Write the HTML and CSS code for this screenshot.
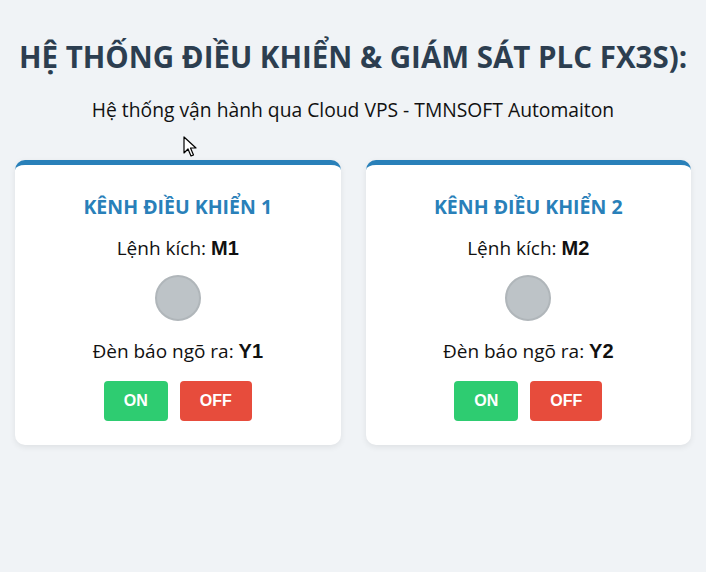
FILE: index.html
```html
<!DOCTYPE html>
<html lang="vi">
<head>
    <meta charset="UTF-8">
    <meta name="viewport" content="width=device-width, initial-scale=1.0">
    <title>PLC FX3S</title>
    <link rel="stylesheet" href="styles.css">
</head>
<body>
    <h1 class="title">HỆ THỐNG ĐIỀU KHIỂN &amp; GIÁM SÁT PLC FX3S):</h1>
    <p class="subtitle">Hệ thống vận hành qua Cloud VPS - TMNSOFT Automaiton</p>

    <div class="grid">
        <div class="card">
            <h3>KÊNH ĐIỀU KHIỂN 1</h3>
            <p class="line">Lệnh kích: <b>M1</b></p>
            <div class="lamp"></div>
            <p class="line">Đèn báo ngõ ra: <b>Y1</b></p>
            <div class="buttons">
                <button class="btn on">ON</button>
                <button class="btn off">OFF</button>
            </div>
        </div>
        <div class="card">
            <h3>KÊNH ĐIỀU KHIỂN 2</h3>
            <p class="line">Lệnh kích: <b>M2</b></p>
            <div class="lamp"></div>
            <p class="line">Đèn báo ngõ ra: <b>Y2</b></p>
            <div class="buttons">
                <button class="btn on">ON</button>
                <button class="btn off">OFF</button>
            </div>
        </div>
    </div>

    <svg class="cursor" width="14" height="22" viewBox="0 0 14 22">
        <path d="M1 1 L1 17 L5 13 L8 20 L10.5 19 L7.5 12 L13 12 Z" fill="#fff" stroke="#000" stroke-width="1.2" stroke-linejoin="round"/>
    </svg>
</body>
</html>
```

FILE: styles.css
```css
body {
    font-family: "Open Sans", "Noto Sans", sans-serif;
    margin: 0;
    padding: 38px 15px 20px;
    background-color: #f0f3f6;
    color: #111;
    text-align: center;
}
.title {
    margin: 0;
    font-size: 29.5px;
    line-height: 38px;
    font-weight: 700;
    color: #2c3e50;
}
.subtitle {
    margin: 22px 0 0;
    font-size: 19.3px;
    line-height: 24px;
}
.grid {
    display: grid;
    grid-template-columns: 1fr 1fr;
    gap: 25px;
    margin-top: 38px;
}
.card {
    background: #fff;
    border-top: 5px solid #2980b9;
    border-radius: 10px;
    box-shadow: 0 2px 6px rgba(0, 0, 0, 0.08);
    padding: 20px 20px 24px;
}
.card h3 {
    margin: 8px 0 0;
    font-size: 19.5px;
    line-height: 27px;
    color: #2980b9;
}
.line {
    margin: 16px 0 0;
    font-size: 19px;
    line-height: 24px;
}
.line b {
    font-family: "Liberation Sans", Arial, sans-serif;
    font-size: 20px;
}
.lamp {
    width: 42px;
    height: 42px;
    margin: 15px auto 18px;
    border-radius: 50%;
    background: #bdc3c7;
    border: 2px solid #b0b6ba;
}
.buttons {
    display: flex;
    justify-content: center;
    gap: 12px;
    margin-top: 18px;
}
.btn {
    height: 40px;
    padding: 0 20px;
    border: none;
    border-radius: 4px;
    color: #fff;
    font-family: "Liberation Sans", Arial, sans-serif;
    font-size: 16px;
    font-weight: 700;
    cursor: pointer;
}
.btn.on {
    background-color: #2ecc71;
}
.btn.off {
    background-color: #e74c3c;
}
.cursor {
    position: absolute;
    left: 183px;
    top: 136px;
}
```
